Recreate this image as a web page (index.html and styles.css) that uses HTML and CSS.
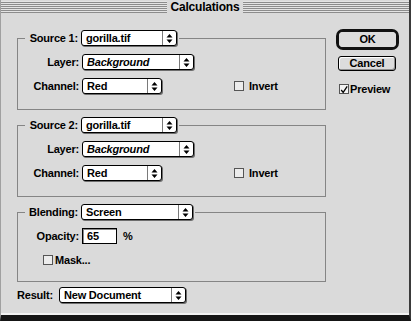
FILE: index.html
```html
<!DOCTYPE html>
<html lang="en">
<head>
    <title>Calculations</title>
    <meta charset="UTF-8">
    <meta name="viewport" content="width=device-width, initial-scale=1.0">
    <link rel="stylesheet" href="styles.css">
</head>
<body>
    <div class="window">
        <div class="titlebar"><span class="title">Calculations</span></div>

        <div class="content">
            <div class="main">
                <!-- Source 1 -->
                <fieldset class="group">
                    <legend class="group-head">
                        <span class="head-label">Source 1:</span>
                        <span class="popup w-source">
                            <span class="popup-text">gorilla.tif</span>
                            <span class="popup-arrows"><svg width="7" height="11" viewBox="0 0 7 11"><path d="M0.5 4.5 L3.5 1 L6.5 4.5 Z M0.5 6.5 L3.5 10 L6.5 6.5 Z" fill="#000"/></svg></span>
                        </span>
                    </legend>
                    <div class="row">
                        <span class="label">Layer:</span>
                        <span class="popup w-wide">
                            <span class="popup-text italic">Background</span>
                            <span class="popup-arrows"><svg width="7" height="11" viewBox="0 0 7 11"><path d="M0.5 4.5 L3.5 1 L6.5 4.5 Z M0.5 6.5 L3.5 10 L6.5 6.5 Z" fill="#000"/></svg></span>
                        </span>
                    </div>
                    <div class="row">
                        <span class="label">Channel:</span>
                        <span class="popup w-channel">
                            <span class="popup-text">Red</span>
                            <span class="popup-arrows"><svg width="7" height="11" viewBox="0 0 7 11"><path d="M0.5 4.5 L3.5 1 L6.5 4.5 Z M0.5 6.5 L3.5 10 L6.5 6.5 Z" fill="#000"/></svg></span>
                        </span>
                        <span class="check invert"><span class="box"></span>Invert</span>
                    </div>
                </fieldset>

                <!-- Source 2 -->
                <fieldset class="group">
                    <legend class="group-head">
                        <span class="head-label">Source 2:</span>
                        <span class="popup w-source">
                            <span class="popup-text">gorilla.tif</span>
                            <span class="popup-arrows"><svg width="7" height="11" viewBox="0 0 7 11"><path d="M0.5 4.5 L3.5 1 L6.5 4.5 Z M0.5 6.5 L3.5 10 L6.5 6.5 Z" fill="#000"/></svg></span>
                        </span>
                    </legend>
                    <div class="row">
                        <span class="label">Layer:</span>
                        <span class="popup w-wide">
                            <span class="popup-text italic">Background</span>
                            <span class="popup-arrows"><svg width="7" height="11" viewBox="0 0 7 11"><path d="M0.5 4.5 L3.5 1 L6.5 4.5 Z M0.5 6.5 L3.5 10 L6.5 6.5 Z" fill="#000"/></svg></span>
                        </span>
                    </div>
                    <div class="row">
                        <span class="label">Channel:</span>
                        <span class="popup w-channel">
                            <span class="popup-text">Red</span>
                            <span class="popup-arrows"><svg width="7" height="11" viewBox="0 0 7 11"><path d="M0.5 4.5 L3.5 1 L6.5 4.5 Z M0.5 6.5 L3.5 10 L6.5 6.5 Z" fill="#000"/></svg></span>
                        </span>
                        <span class="check invert"><span class="box"></span>Invert</span>
                    </div>
                </fieldset>

                <!-- Blending -->
                <fieldset class="group blend">
                    <legend class="group-head">
                        <span class="head-label">Blending:</span>
                        <span class="popup w-wide">
                            <span class="popup-text">Screen</span>
                            <span class="popup-arrows"><svg width="7" height="11" viewBox="0 0 7 11"><path d="M0.5 4.5 L3.5 1 L6.5 4.5 Z M0.5 6.5 L3.5 10 L6.5 6.5 Z" fill="#000"/></svg></span>
                        </span>
                    </legend>
                    <div class="row">
                        <span class="label">Opacity:</span>
                        <span class="field">65</span>
                        <span class="unit">%</span>
                    </div>
                    <div class="row mask-row">
                        <span class="check"><span class="box"></span>Mask...</span>
                    </div>
                </fieldset>

                <div class="result-row">
                    <span class="result-label">Result:</span>
                    <span class="popup w-result">
                        <span class="popup-text">New Document</span>
                        <span class="popup-arrows"><svg width="7" height="11" viewBox="0 0 7 11"><path d="M0.5 4.5 L3.5 1 L6.5 4.5 Z M0.5 6.5 L3.5 10 L6.5 6.5 Z" fill="#000"/></svg></span>
                    </span>
                </div>
            </div>

            <div class="side">
                <div class="default-ring"><div class="btn ok">OK</div></div>
                <div class="btn cancel">Cancel</div>
                <span class="check preview">
                    <span class="box checked"><svg width="10" height="10" viewBox="0 0 10 10"><path d="M1.5 5 L4 8 L9 0.5" fill="none" stroke="#000" stroke-width="1.6"/></svg></span>Preview
                </span>
            </div>
        </div>
    </div>
</body>
</html>
```

FILE: styles.css
```css
* { box-sizing: border-box; }
body {
    margin: 0;
    font-family: 'Liberation Sans', Arial, sans-serif;
    font-size: 11px;
    font-weight: bold;
    letter-spacing: -0.2px;
    color: #000;
    background: #dadada;
}
.window {
    width: 411px;
    height: 321px;
    background: #dadada;
    border-left: 1px solid #a0a0a0;
    border-right: 2px solid #3a3a3a;
    border-bottom: 6px solid #151515;
    box-shadow: inset 0 -2px 0 #f2f2f2;
}
.titlebar {
    height: 15px;
    padding-top: 1px;
    background: repeating-linear-gradient(to bottom, #8c8c8c 0 1px, #e4e4e4 1px 2px);
    background-clip: content-box;
    background-color: #dadada;
    text-align: center;
    border-bottom: 2px solid #dadada;
    line-height: 12px;
}
.title {
    display: inline-block;
    background: #dadada;
    padding: 0 4px;
    font-size: 12px;
    height: 12px;
}
.content {
    display: flex;
    padding: 15px 0 0 16px;
}
.main {
    width: 309px;
}

/* grouped boxes */
.group {
    margin: 0 0 8px 0;
    padding: 0 0 15px 0;
    border: 1px solid #858585;
    min-width: 0;
}
.group + .group { margin-top: -1px; }
.group.blend { padding-bottom: 13px; }
.group-head {
    margin-left: 7px;
    padding: 0 2px 0 3px;
    display: flex;
    align-items: center;
}
.head-label {
    width: 50px;
    margin-right: 3px;
    display: flex;
    justify-content: flex-end;
    white-space: nowrap;
}
.row {
    display: flex;
    align-items: center;
    margin-top: 8px;
    height: 16px;
}
.label {
    width: 61px;
    margin-right: 3px;
    text-align: right;
    white-space: nowrap;
}

/* popup menus */
.popup {
    display: inline-flex;
    align-items: stretch;
    height: 16px;
    background: #fff;
    border: 1px solid #000;
    border-radius: 3px;
    box-shadow: 1px 1px 0 #6e6e6e;
}
.popup-text {
    flex: 1;
    padding-left: 4px;
    line-height: 14px;
    white-space: nowrap;
}
.italic { font-style: italic; }
.popup-arrows {
    width: 14px;
    border-left: 1px solid #7a7a7a;
    display: flex;
    align-items: center;
    justify-content: center;
}
.w-source { width: 96px; }
.w-wide { width: 112px; }
.w-channel { width: 80px; }
.w-result { width: 127px; }

/* checkboxes */
.check {
    display: inline-flex;
    align-items: center;
    white-space: nowrap;
}
.box {
    width: 10px;
    height: 10px;
    border: 1px solid #555;
    background: #ececec;
    margin-right: 5px;
    display: inline-flex;
}
.invert { margin-left: 72px; }
.mask-row { margin-top: 8px; }
.mask-row .check { margin-left: 25px; }
.mask-row .box { margin-right: 2px; }

/* opacity text field */
.field {
    width: 35px;
    height: 16px;
    border: 1px solid #000;
    background: #fff;
    box-shadow: inset 1px 1px 0 #8a8a8a;
    padding-left: 4px;
    line-height: 14px;
}
.unit { margin-left: 6px; }

.result-row {
    display: flex;
    align-items: center;
    margin-top: -3px;
}
.result-label {
    width: 39px;
    margin-right: 3px;
}

/* right hand buttons */
.side {
    margin-left: 10px;
    display: flex;
    flex-direction: column;
}
.default-ring {
    width: 63px;
    height: 21px;
    margin-top: -1px;
    border: 3px solid #111;
    border-radius: 7px;
    background: #dadada;
}
.btn {
    text-align: center;
    background: #dcdcdc;
}
.ok {
    height: 15px;
    line-height: 14px;
    border-radius: 4px;
}
.cancel {
    width: 58px;
    height: 15px;
    margin: 6px 0 0 2px;
    border: 1px solid #000;
    border-radius: 3px;
    line-height: 13px;
    box-shadow: inset -1px -1px 0 #8f8f8f, inset 1px 1px 0 #fff;
}
.preview {
    margin: 12px 0 0 3px;
}
.preview .box {
    margin-right: 1px;
    background: #f4f4f4;
    overflow: visible;
}
```
